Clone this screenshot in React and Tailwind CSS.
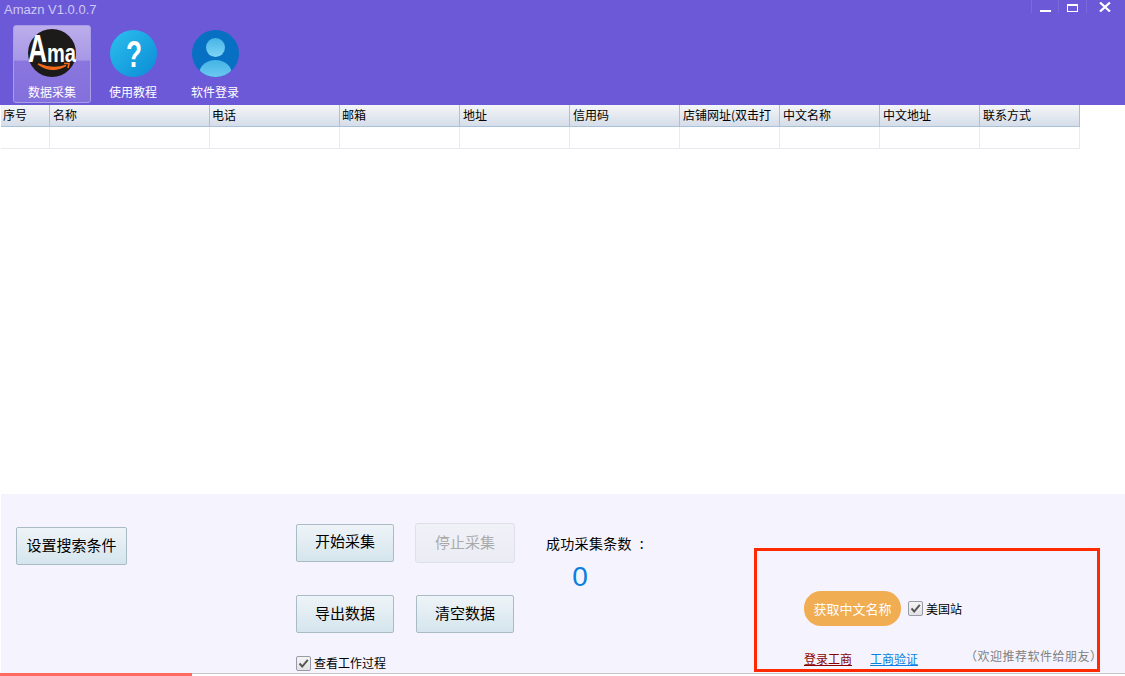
const font = '"Noto Sans CJK SC", "Liberation Sans", sans-serif';

const columns = [
  ["序号", "w-[49px]"],
  ["名称", "w-[160px]"],
  ["电话", "w-[130px]"],
  ["邮箱", "w-[120px]"],
  ["地址", "w-[110px]"],
  ["信用码", "w-[110px]"],
  ["店铺网址(双击打", "w-[100px]"],
  ["中文名称", "w-[100px]"],
  ["中文地址", "w-[100px]"],
  ["联系方式", "w-[100px]"],
];

function AmaIcon() {
  return (
    <svg width="48" height="48" viewBox="0 0 48 48">
      <circle cx="24" cy="24" r="24" fill="#1d1a1a" />
      <text x="0" y="33" fill="#fff" fontFamily="Liberation Sans" fontWeight="700" fontSize="38" textLength="19" lengthAdjust="spacingAndGlyphs">A</text>
      <text x="19" y="33" fill="#fff" fontFamily="Liberation Sans" fontWeight="700" fontSize="25" textLength="29" lengthAdjust="spacingAndGlyphs">ma</text>
      <path d="M10 35 Q24 45 38 36.5 Q24 41 10 35Z" fill="#f26a1b" stroke="#f26a1b" strokeWidth="1.4" />
      <path d="M36 34.5 L41 34.5 L40 39" fill="none" stroke="#f26a1b" strokeWidth="1.6" />
    </svg>
  );
}

function HelpIcon() {
  return (
    <svg width="47" height="47" viewBox="0 0 47 47">
      <defs>
        <linearGradient id="hg" x1="0" y1="0" x2="1" y2="1">
          <stop offset="0" stopColor="#2cc0ee" />
          <stop offset="1" stopColor="#0a8bd6" />
        </linearGradient>
      </defs>
      <circle cx="23.5" cy="23.5" r="23.5" fill="url(#hg)" />
      <text x="16" y="37" fill="#fff" fontFamily="Liberation Sans" fontWeight="700" fontSize="37" textLength="16" lengthAdjust="spacingAndGlyphs">?</text>
    </svg>
  );
}

function UserIcon() {
  return (
    <svg width="47" height="47" viewBox="0 0 47 47">
      <defs>
        <linearGradient id="ug" x1="0" y1="0" x2="0" y2="1">
          <stop offset="0" stopColor="#45b4e6" />
          <stop offset="1" stopColor="#7fd4f5" />
        </linearGradient>
        <clipPath id="uc"><circle cx="23.5" cy="23.5" r="23.5" /></clipPath>
      </defs>
      <circle cx="23.5" cy="23.5" r="23.5" fill="#0870c2" />
      <circle cx="23.5" cy="17.5" r="9.5" fill="url(#ug)" />
      <ellipse cx="23.5" cy="43" rx="16" ry="13" fill="url(#ug)" clipPath="url(#uc)" />
    </svg>
  );
}

function ToolButton({ label, active, children }) {
  return (
    <div
      className={
        "w-[78px] h-[78px] flex flex-col items-center rounded-[3px] border " +
        (active
          ? "border-[#a99ee6] bg-[linear-gradient(#bcaeec_0%,#a797e6_45%,#8a76de_46%,#8470dc_100%)]"
          : "border-transparent")
      }
    >
      <div className="mt-[3px] h-[48px] flex items-center justify-center">{children}</div>
      <div className="mt-[7px] text-[12px] leading-[16px] text-white whitespace-nowrap">{label}</div>
    </div>
  );
}

function Btn({ children, className = "" }) {
  return (
    <div
      className={
        "flex items-center justify-center h-[38px] pb-[2px] rounded-[2px] border border-[#a9bcc6] bg-[linear-gradient(#eef4f8,#d5e5ed)] text-[15px] text-black whitespace-nowrap " +
        className
      }
    >
      {children}
    </div>
  );
}

function Check({ label }) {
  return (
    <div className="flex items-center gap-[3px]">
      <div className="w-[15px] h-[15px] rounded-[2px] border border-[#9a9aa6] bg-[linear-gradient(#f4f4f4,#e2e2e6)] flex items-center justify-center">
        <svg width="11" height="11" viewBox="0 0 11 11">
          <path d="M1.5 5.5 L4.2 8.5 L9.8 1.8" fill="none" stroke="#555" strokeWidth="1.9" />
        </svg>
      </div>
      <span className="text-[12px] leading-[16px] text-black whitespace-nowrap">{label}</span>
    </div>
  );
}

export default function App() {
  return (
    <div className="w-[1125px] h-[676px] flex flex-col overflow-hidden bg-white" style={{ fontFamily: font }}>
      <header className="h-[105px] shrink-0 bg-[#6c59d8] flex flex-col">
        <div className="h-[25px] flex justify-between">
          <div className="pl-[4px] pt-[2px] text-[13px] leading-[16px] text-[#cfc8f4]" style={{ fontFamily: '"Liberation Sans", sans-serif' }}>
            Amazn V1.0.0.7
          </div>
          <div className="flex h-[13px] mr-[2px]">
            <div className="w-[28px] flex items-end justify-center border-l border-r border-[#7a69dc]">
              <div className="w-[11px] h-[2px] bg-white mb-[1px] ml-[1px]" />
            </div>
            <div className="w-[28px] flex items-center justify-center border-r border-[#7a69dc]">
              <div className="w-[11px] h-[8px] border border-white border-t-2 mt-[2px]" />
            </div>
            <div className="w-[36px] flex items-center justify-center">
              <svg width="12" height="10" viewBox="0 0 12 10" className="mt-[1px]">
                <path d="M1 0.5 L11 9.5 M11 0.5 L1 9.5" stroke="#fff" strokeWidth="2.2" />
              </svg>
            </div>
          </div>
        </div>
        <div className="flex pl-[13px] gap-[3px]">
          <ToolButton label="数据采集" active><AmaIcon /></ToolButton>
          <div className="flex gap-[4px]">
            <ToolButton label="使用教程"><HelpIcon /></ToolButton>
            <ToolButton label="软件登录"><UserIcon /></ToolButton>
          </div>
        </div>
      </header>

      <main className="flex-1 pl-[1px]">
        <div className="flex w-[1079px] h-[22px] border-b border-[#a9c2d8] bg-[linear-gradient(#f4f6f8,#d5dde9)]">
          {columns.map(([t, w], i) => (
            <div key={t} className={w + " shrink-0 border-r border-[#a9c2d8] text-[12px] leading-[20px] text-black overflow-hidden whitespace-nowrap " + (i === 0 || i === 2 || i === 3 ? "pl-[2px]" : "pl-[3px]")}>
              {t}
            </div>
          ))}
        </div>
        <div className="flex w-[1079px] h-[22px] border-b border-[#e8eaf0]">
          {columns.map(([t, w]) => (
            <div key={t} className={w + " shrink-0 border-r border-[#e8eaf0]"} />
          ))}
        </div>
      </main>

      <section className="h-[179px] ml-[1px] shrink-0 bg-[#f5f4fe] flex">
        <div className="w-[295px] shrink-0 pl-[15px] pt-[33px]">
          <Btn className="w-[111px]">设置搜索条件</Btn>
        </div>
        <div className="w-[250px] shrink-0 pt-[29px]">
          <div className="flex items-center gap-[21px] h-[40px]">
            <Btn className="w-[98px] -mt-[1px]">开始采集</Btn>
            <div className="w-[100px] h-[40px] pb-[2px] flex items-center justify-center rounded-[3px] border border-[#dedfe8] bg-[linear-gradient(#f1f2f8,#eaecf4)] text-[15px] text-[#aaaaaa]">
              停止采集
            </div>
          </div>
          <div className="flex gap-[22px] mt-[32px]">
            <Btn className="w-[98px]">导出数据</Btn>
            <Btn className="w-[98px]">清空数据</Btn>
          </div>
          <div className="mt-[22px]"><Check label="查看工作过程" /></div>
        </div>
        <div className="w-[208px] shrink-0 pt-[39px]">
          <div className="text-[14px] leading-[20px] tracking-[0.3px] text-black whitespace-nowrap">
            成功采集条数<span className="ml-[8px]">:</span>
          </div>
          <div className="w-[68px] mt-[8px] text-center text-[28px] leading-[32px] text-[#0a7fe0]" style={{ fontFamily: '"Liberation Sans", sans-serif' }}>0</div>
        </div>
        <div className="mt-[54px] w-[346px] h-[124px] border-[3px] border-[#ff2a00] pl-[47px] pt-[40px] shrink-0">
          <div className="flex items-center gap-[7px]">
            <div className="w-[97px] h-[35px] rounded-[17px] bg-[#f0ad52] flex items-center justify-center text-[13px] text-white whitespace-nowrap">
              获取中文名称
            </div>
            <Check label="美国站" />
          </div>
          <div className="flex mt-[25px] text-[12px] leading-[16px]">
            <span className="underline text-[#8a0000] whitespace-nowrap">登录工商</span>
            <span className="underline text-[#0a7fe0] ml-[18px] whitespace-nowrap">工商验证</span>
            <span className="text-[#808080] ml-[47px] -mt-[3px] tracking-[0.5px] whitespace-nowrap">（欢迎推荐软件给朋友）</span>
          </div>
        </div>
      </section>

      <footer className="h-[3px] shrink-0 bg-white border-t border-[#c8c8c8]">
        <div className="w-[192px] h-[3px] -mt-px bg-[#ff6a5e]" />
      </footer>
    </div>
  );
}
